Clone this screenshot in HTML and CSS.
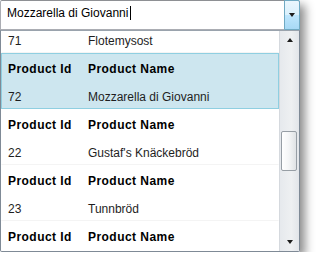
FILE: index.html
```html
<!DOCTYPE html>
<html lang="en">
<head>
    <meta charset="UTF-8">
    <title>Product Combo</title>
    <link rel="stylesheet" href="styles.css">
</head>
<body>
<div class="combo-wrap">
    <div class="combo">
        <div class="combo-text"><span class="value">Mozzarella di Giovanni</span></div>
        <div class="combo-btn"><span class="tri-down"></span></div>
    </div>

    <div class="popup">
        <div class="list">
            <div class="item first">
                <div class="row head"><span class="col-id">Product Id</span><span>Product Name</span></div>
                <div class="row"><span class="col-id">71</span><span>Flotemysost</span></div>
            </div>
            <div class="item selected">
                <div class="row head"><span class="col-id">Product Id</span><span>Product Name</span></div>
                <div class="row"><span class="col-id">72</span><span>Mozzarella di Giovanni</span></div>
            </div>
            <div class="item">
                <div class="row head"><span class="col-id">Product Id</span><span>Product Name</span></div>
                <div class="row"><span class="col-id">22</span><span>Gustaf's Knäckebröd</span></div>
            </div>
            <div class="item">
                <div class="row head"><span class="col-id">Product Id</span><span>Product Name</span></div>
                <div class="row"><span class="col-id">23</span><span>Tunnbröd</span></div>
            </div>
            <div class="item">
                <div class="row head"><span class="col-id">Product Id</span><span>Product Name</span></div>
            </div>
        </div>
        <div class="scrollbar">
            <div class="sb-btn"><span class="tri-up"></span></div>
            <div class="sb-track">
                <div class="sb-thumb"></div>
            </div>
            <div class="sb-btn"><span class="tri-down"></span></div>
        </div>
    </div>
</div>
</body>
</html>
```

FILE: styles.css
```css
* {
    margin: 0;
    padding: 0;
    box-sizing: border-box;
}

body {
    background: #ffffff;
    font-family: "Liberation Sans", Arial, sans-serif;
    font-size: 12px;
    color: #1e1e1e;
}

.combo-wrap {
    width: 300px;
    box-shadow: 5px 5px 9px rgba(0, 0, 0, 0.45);
}

/* Combo box */
.combo {
    display: flex;
    height: 30px;
    border: 1px solid #abadb3;
    border-top-color: #8e9094;
    border-radius: 2px 2px 0 0;
    background: #ffffff;
}

.combo-text {
    flex: 1;
    padding: 4px 0 0 6px;
    line-height: 16px;
    color: #000000;
    white-space: nowrap;
}

/* text cursor drawn as the right edge of the value */
.value {
    padding-right: 2px;
    border-right: 1px solid #000000;
}

.combo-btn {
    width: 16px;
    margin: -1px -1px -1px 0;
    border: 1px solid #6fa9c2;
    border-radius: 0 2px 0 0;
    background: linear-gradient(to bottom, #eaf6fd 0%, #d9f0fc 50%, #bee6fd 51%, #a7d9f5 100%);
    display: flex;
    justify-content: center;
    align-items: center;
}

.tri-down {
    width: 0;
    height: 0;
    border-left: 3.5px solid transparent;
    border-right: 3.5px solid transparent;
    border-top: 4px solid #1c1c1c;
}

.tri-up {
    width: 0;
    height: 0;
    border-left: 3.5px solid transparent;
    border-right: 3.5px solid transparent;
    border-bottom: 4px solid #1c1c1c;
}

/* Drop-down popup */
.popup {
    display: flex;
    height: 222px;
    border: 1px solid #7f8a96;
    border-top-color: #9aa3ad;
    border-radius: 0 0 2px 2px;
    background: #ffffff;
    overflow: hidden;
}

.list {
    width: 278px;
    overflow: hidden;
}

.item {
    height: 56px;
    padding: 6px 6px 3px;
    border: 1px solid transparent;
    border-bottom-color: #f4f4f4;
}

.item.first {
    margin-top: -34px;
}

.item.selected {
    background: #cde6ef;
    border-color: #8fcfe1;
}

.row {
    display: flex;
    line-height: 18px;
    white-space: nowrap;
}

.row + .row {
    margin-top: 10px;
}

.head {
    font-weight: bold;
    color: #000000;
    letter-spacing: 0.45px;
}

.col-id {
    width: 80px;
}

/* Scrollbar */
.scrollbar {
    width: 20px;
    display: flex;
    flex-direction: column;
    border-left: 1px solid #d5d9de;
    background: linear-gradient(to right, #e6e9ed, #eef0f2 60%, #e2e5e9);
}

.sb-btn {
    height: 18px;
    display: flex;
    justify-content: center;
    align-items: center;
}

.sb-track {
    flex: 1;
    padding-top: 82px;
}

.sb-thumb {
    width: 16px;
    height: 40px;
    margin-left: 1px;
    border: 1px solid #979ea5;
    border-radius: 2px;
    background: linear-gradient(to right, #ffffff, #f4f5f6 50%, #dfe2e5);
}
```
